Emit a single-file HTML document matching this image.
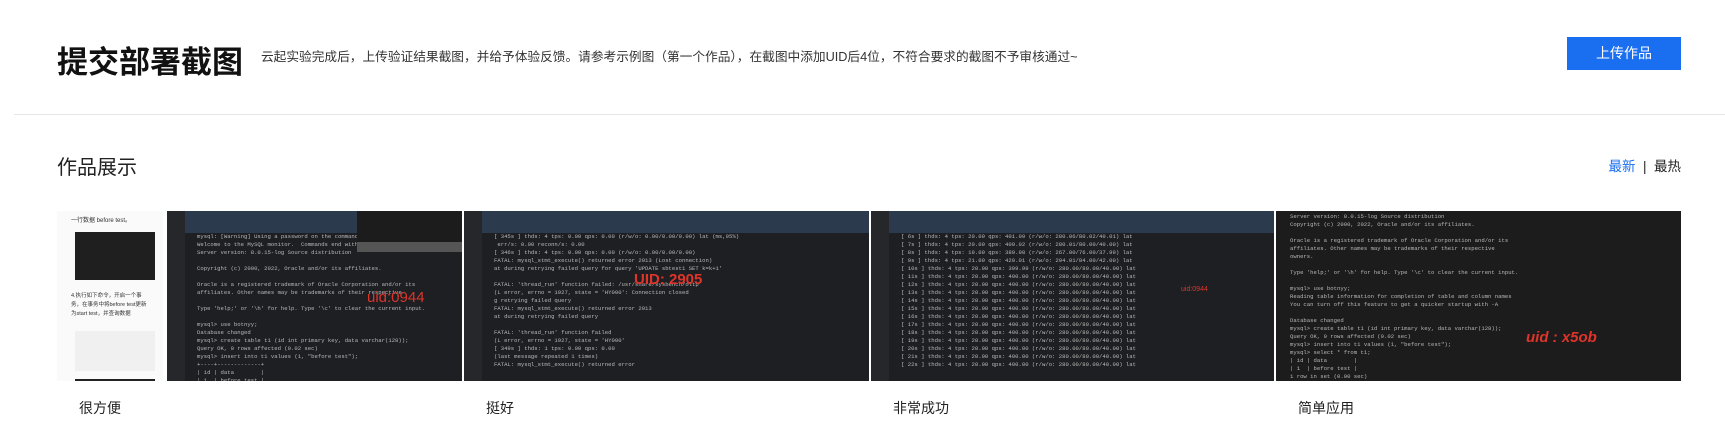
<!DOCTYPE html>
<html><head><meta charset="utf-8"><style>
*{margin:0;padding:0;box-sizing:border-box}
body{width:1725px;height:434px;background:#fff;font-family:"Liberation Sans","Noto Sans CJK SC",sans-serif;position:relative;overflow:hidden;color:#1f1f1f}
.a{position:absolute}
.title{left:57px;top:37px;font-size:31px;font-weight:bold;color:#111;letter-spacing:0}
.desc{left:261px;top:46px;font-size:12.7px;color:#333}
.btn{left:1567px;top:37px;width:114px;height:33px;background:#1a6ef0;color:#fff;font-size:14px;text-align:center;line-height:33px}
.hr{left:14px;top:114px;right:0;height:1px;background:#e6e6e6}
.h2{left:57px;top:151px;font-size:20px;color:#222}
.tabs{right:44px;top:155px;font-size:13.5px;color:#222}
.tabs b{color:#1a6ef0;font-weight:normal}
.img{top:211px;height:170px;background:#1e1f22;overflow:hidden}
.img pre{font-family:"Liberation Mono",monospace;font-size:5.6px;line-height:8px;color:#b8b8b8;padding:22px 0 0 30px;white-space:pre}
.bar{position:absolute;left:0;right:0;top:0;height:22px;background:#2b3a4d}
.side{position:absolute;left:0;top:0;bottom:0;width:18px;background:#25272b}
.cap{top:398px;font-size:14px;color:#222}
</style></head><body>
<div class="a title">提交部署截图</div>
<div class="a desc">云起实验完成后，上传验证结果截图，并给予体验反馈。请参考示例图（第一个作品），在截图中添加UID后4位，不符合要求的截图不予审核通过~</div>
<div class="a btn">上传作品</div>
<div class="a hr"></div>
<div class="a h2">作品展示</div>
<div class="a tabs"><b>最新</b> &nbsp;|&nbsp; 最热</div>

<div class="a" style="left:57px;top:211px;width:106px;height:170px;background:#fafafa;overflow:hidden">
 <div style="font-size:6px;color:#333;padding:4px 14px">一行数据 before test。</div>
 <div style="margin:4px 0 0 18px;width:80px;height:48px;background:#1f1f1f"></div>
 <div style="font-size:5.5px;color:#333;padding:12px 14px;line-height:9px">4.执行如下命令，开启一个事务，在事务中将before test更新为start test，并查询数据</div>
 <div style="margin:0 0 0 18px;width:80px;height:40px;background:#f0f0f0"></div>
 <div style="margin:8px 0 0 18px;width:80px;height:30px;background:#222"></div>
</div>
<div class="a img" style="left:167px;width:295px"><div class="bar"></div><div class="side"></div>
<pre>mysql: [Warning] Using a password on the command line interface can be
Welcome to the MySQL monitor.  Commands end with ; or \g.
Server version: 8.0.15-log Source distribution

Copyright (c) 2000, 2022, Oracle and/or its affiliates.

Oracle is a registered trademark of Oracle Corporation and/or its
affiliates. Other names may be trademarks of their respective

Type 'help;' or '\h' for help. Type '\c' to clear the current input.

mysql> use botnyy;
Database changed
mysql> create table t1 (id int primary key, data varchar(128));
Query OK, 0 rows affected (0.02 sec)
mysql> insert into t1 values (1, "before test");
+----+-------------+
| id | data        |
| 1  | before test |
+----+-------------+</pre>
<div class="a" style="left:200px;top:78px;color:#e0342b;font-size:15px">uid:0944</div>
<div class="a" style="left:190px;top:0;width:105px;height:40px;background:#1c1c1c"></div>
<div class="a" style="left:190px;top:31px;width:105px;height:10px;background:#555"></div>
</div>

<div class="a img" style="left:464px;width:405px"><div class="bar"></div><div class="side"></div>
<pre>[ 345s ] thds: 4 tps: 0.00 qps: 0.00 (r/w/o: 0.00/0.00/0.00) lat (ms,95%)
 err/s: 0.00 reconn/s: 0.00
[ 346s ] thds: 4 tps: 0.00 qps: 0.00 (r/w/o: 0.00/0.00/0.00)
FATAL: mysql_stmt_execute() returned error 2013 (Lost connection)
at during retrying failed query for query 'UPDATE sbtest1 SET k=k+1'

FATAL: 'thread_run' function failed: /usr/share/sysbench/oltp
(L error, errno = 1927, state = 'HY000': Connection closed
g retrying failed query
FATAL: mysql_stmt_execute() returned error 2013
at during retrying failed query

FATAL: 'thread_run' function failed
(L error, errno = 1927, state = 'HY000'
[ 349s ] thds: 1 tps: 0.00 qps: 0.00
(last message repeated 1 times)
FATAL: mysql_stmt_execute() returned error</pre>
<div class="a" style="left:170px;top:60px;color:#e0342b;font-size:15px;font-weight:bold">UID: 2905</div>
</div>

<div class="a img" style="left:871px;width:403px"><div class="bar"></div><div class="side"></div>
<pre>[ 6s ] thds: 4 tps: 20.00 qps: 401.09 (r/w/o: 280.06/80.02/40.01) lat
[ 7s ] thds: 4 tps: 20.00 qps: 400.02 (r/w/o: 280.01/80.00/40.00) lat
[ 8s ] thds: 4 tps: 19.00 qps: 380.98 (r/w/o: 267.00/76.00/37.99) lat
[ 9s ] thds: 4 tps: 21.00 qps: 420.01 (r/w/o: 294.01/84.00/42.00) lat
[ 10s ] thds: 4 tps: 20.00 qps: 399.99 (r/w/o: 280.00/80.00/40.00) lat
[ 11s ] thds: 4 tps: 20.00 qps: 400.00 (r/w/o: 280.00/80.00/40.00) lat
[ 12s ] thds: 4 tps: 20.00 qps: 400.00 (r/w/o: 280.00/80.00/40.00) lat
[ 13s ] thds: 4 tps: 20.00 qps: 400.00 (r/w/o: 280.00/80.00/40.00) lat
[ 14s ] thds: 4 tps: 20.00 qps: 400.00 (r/w/o: 280.00/80.00/40.00) lat
[ 15s ] thds: 4 tps: 20.00 qps: 400.00 (r/w/o: 280.00/80.00/40.00) lat
[ 16s ] thds: 4 tps: 20.00 qps: 400.00 (r/w/o: 280.00/80.00/40.00) lat
[ 17s ] thds: 4 tps: 20.00 qps: 400.00 (r/w/o: 280.00/80.00/40.00) lat
[ 18s ] thds: 4 tps: 20.00 qps: 400.00 (r/w/o: 280.00/80.00/40.00) lat
[ 19s ] thds: 4 tps: 20.00 qps: 400.00 (r/w/o: 280.00/80.00/40.00) lat
[ 20s ] thds: 4 tps: 20.00 qps: 400.00 (r/w/o: 280.00/80.00/40.00) lat
[ 21s ] thds: 4 tps: 20.00 qps: 400.00 (r/w/o: 280.00/80.00/40.00) lat
[ 22s ] thds: 4 tps: 20.00 qps: 400.00 (r/w/o: 280.00/80.00/40.00) lat</pre>
<div class="a" style="left:310px;top:75px;color:#e0342b;font-size:7px">uid:0944</div>
</div>

<div class="a img" style="left:1276px;width:405px;background:#1c1c1c">
<pre style="padding:2px 0 0 14px">Server version: 8.0.15-log Source distribution
Copyright (c) 2000, 2022, Oracle and/or its affiliates.

Oracle is a registered trademark of Oracle Corporation and/or its
affiliates. Other names may be trademarks of their respective
owners.

Type 'help;' or '\h' for help. Type '\c' to clear the current input.

mysql> use botnyy;
Reading table information for completion of table and column names
You can turn off this feature to get a quicker startup with -A

Database changed
mysql> create table t1 (id int primary key, data varchar(128));
Query OK, 0 rows affected (0.02 sec)
mysql> insert into t1 values (1, "before test");
mysql> select * from t1;
| id | data        |
| 1  | before test |
1 row in set (0.00 sec)
mysql> begin;
Query OK, 0 rows affected (0.00 sec)</pre>
<div class="a" style="left:250px;top:118px;color:#e0342b;font-size:15px;font-weight:bold;font-style:italic">uid : x5ob</div>
</div>

<div class="a cap" style="left:79px">很方便</div>
<div class="a cap" style="left:486px">挺好</div>
<div class="a cap" style="left:893px">非常成功</div>
<div class="a cap" style="left:1298px">简单应用</div>
</body></html>
